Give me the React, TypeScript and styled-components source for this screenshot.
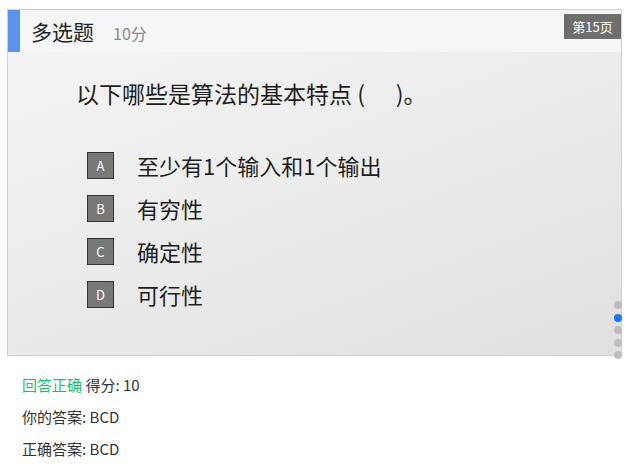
import React from 'react'
import styled, { createGlobalStyle } from 'styled-components'

const GlobalStyle = createGlobalStyle`
  body {
    margin: 0;
    background: #fff;
    font-family: "Segoe UI", "Noto Sans CJK SC", "Noto Sans", sans-serif;
  }
`

const Page = styled.div`
  width: 628px;
  height: 467px;
  padding: 9px 0 0 7px;
  box-sizing: border-box;
`

const Slide = styled.div`
  position: relative;
  width: 615px;
  height: 347px;
  border: 1px solid #cfcfcf;
  box-sizing: border-box;
  display: flex;
  flex-direction: column;
  background: linear-gradient(160deg, #f5f5f5 0%, #ededed 45%, #e0e0e0 100%);
`

const Header = styled.div`
  height: 42px;
  flex: none;
  display: flex;
  align-items: center;
  background: #f5f6f8;
`

const Accent = styled.div`
  width: 12px;
  align-self: stretch;
  background: #5b92ee;
`

const Title = styled.span`
  margin-left: 11px;
  font-size: 21px;
  color: #222;
  line-height: 1;
`

const Score = styled.span`
  margin-left: 19px;
  margin-top: 3px;
  font-size: 16px;
  color: #8a8a8a;
`

const PageBadge = styled.div`
  position: absolute;
  top: 4px;
  right: 0;
  width: 57px;
  height: 25px;
  background: #6e6e6e;
  color: #fff;
  font-size: 13px;
  display: flex;
  align-items: center;
  justify-content: center;
`

const Body = styled.div`
  flex: 1;
  padding: 25px 0 0 68px;
`

const Question = styled.div`
  font-size: 23px;
  color: #1e1e1e;
  height: 32px;
  line-height: 32px;
  white-space: pre;
`

const Options = styled.div`
  margin-top: 43px;
  margin-left: 11px;
  display: flex;
  flex-direction: column;
  gap: 17px;
`

const Option = styled.div`
  display: flex;
  align-items: center;
  gap: 23px;
  height: 26px;
`

const Letter = styled.div`
  width: 27px;
  height: 27px;
  box-sizing: border-box;
  border: 1px solid #333;
  background: #787878;
  color: #fff;
  font-size: 13px;
  display: flex;
  align-items: center;
  justify-content: center;
`

const OptionText = styled.span`
  font-size: 22px;
  color: #1e1e1e;
`

const Dots = styled.div`
  position: absolute;
  right: -1px;
  top: 291px;
  display: flex;
  flex-direction: column;
  gap: 4.5px;
`

const Dot = styled.div<{ $active?: boolean }>`
  width: 8px;
  height: 8px;
  border-radius: 50%;
  background: ${p => (p.$active ? '#1677ff' : '#bdbdbd')};
`

const Result = styled.div`
  padding: 19px 0 0 15px;
  display: flex;
  flex-direction: column;
  gap: 12px;
  font-size: 15px;
  color: #333;
`

const Line = styled.div`
  height: 20px;
  line-height: 20px;
`

const Correct = styled.span`
  color: #19be6b;
`

const options = [
  { key: 'A', text: '至少有1个输入和1个输出' },
  { key: 'B', text: '有穷性' },
  { key: 'C', text: '确定性' },
  { key: 'D', text: '可行性' },
]

export default function App() {
  return (
    <>
      <GlobalStyle />
      <Page>
        <Slide>
          <Header>
            <Accent />
            <Title>多选题</Title>
            <Score>10分</Score>
          </Header>
          <PageBadge>第15页</PageBadge>
          <Body>
            <Question>{'以下哪些是算法的基本特点 (      )。'}</Question>
            <Options>
              {options.map(o => (
                <Option key={o.key}>
                  <Letter>{o.key}</Letter>
                  <OptionText>{o.text}</OptionText>
                </Option>
              ))}
            </Options>
          </Body>
          <Dots>
            {[0, 1, 2, 3, 4].map(i => (
              <Dot key={i} $active={i === 1} />
            ))}
          </Dots>
        </Slide>
        <Result>
          <Line>
            <Correct>回答正确</Correct> 得分: 10
          </Line>
          <Line>你的答案: BCD</Line>
          <Line>正确答案: BCD</Line>
        </Result>
      </Page>
    </>
  )
}
